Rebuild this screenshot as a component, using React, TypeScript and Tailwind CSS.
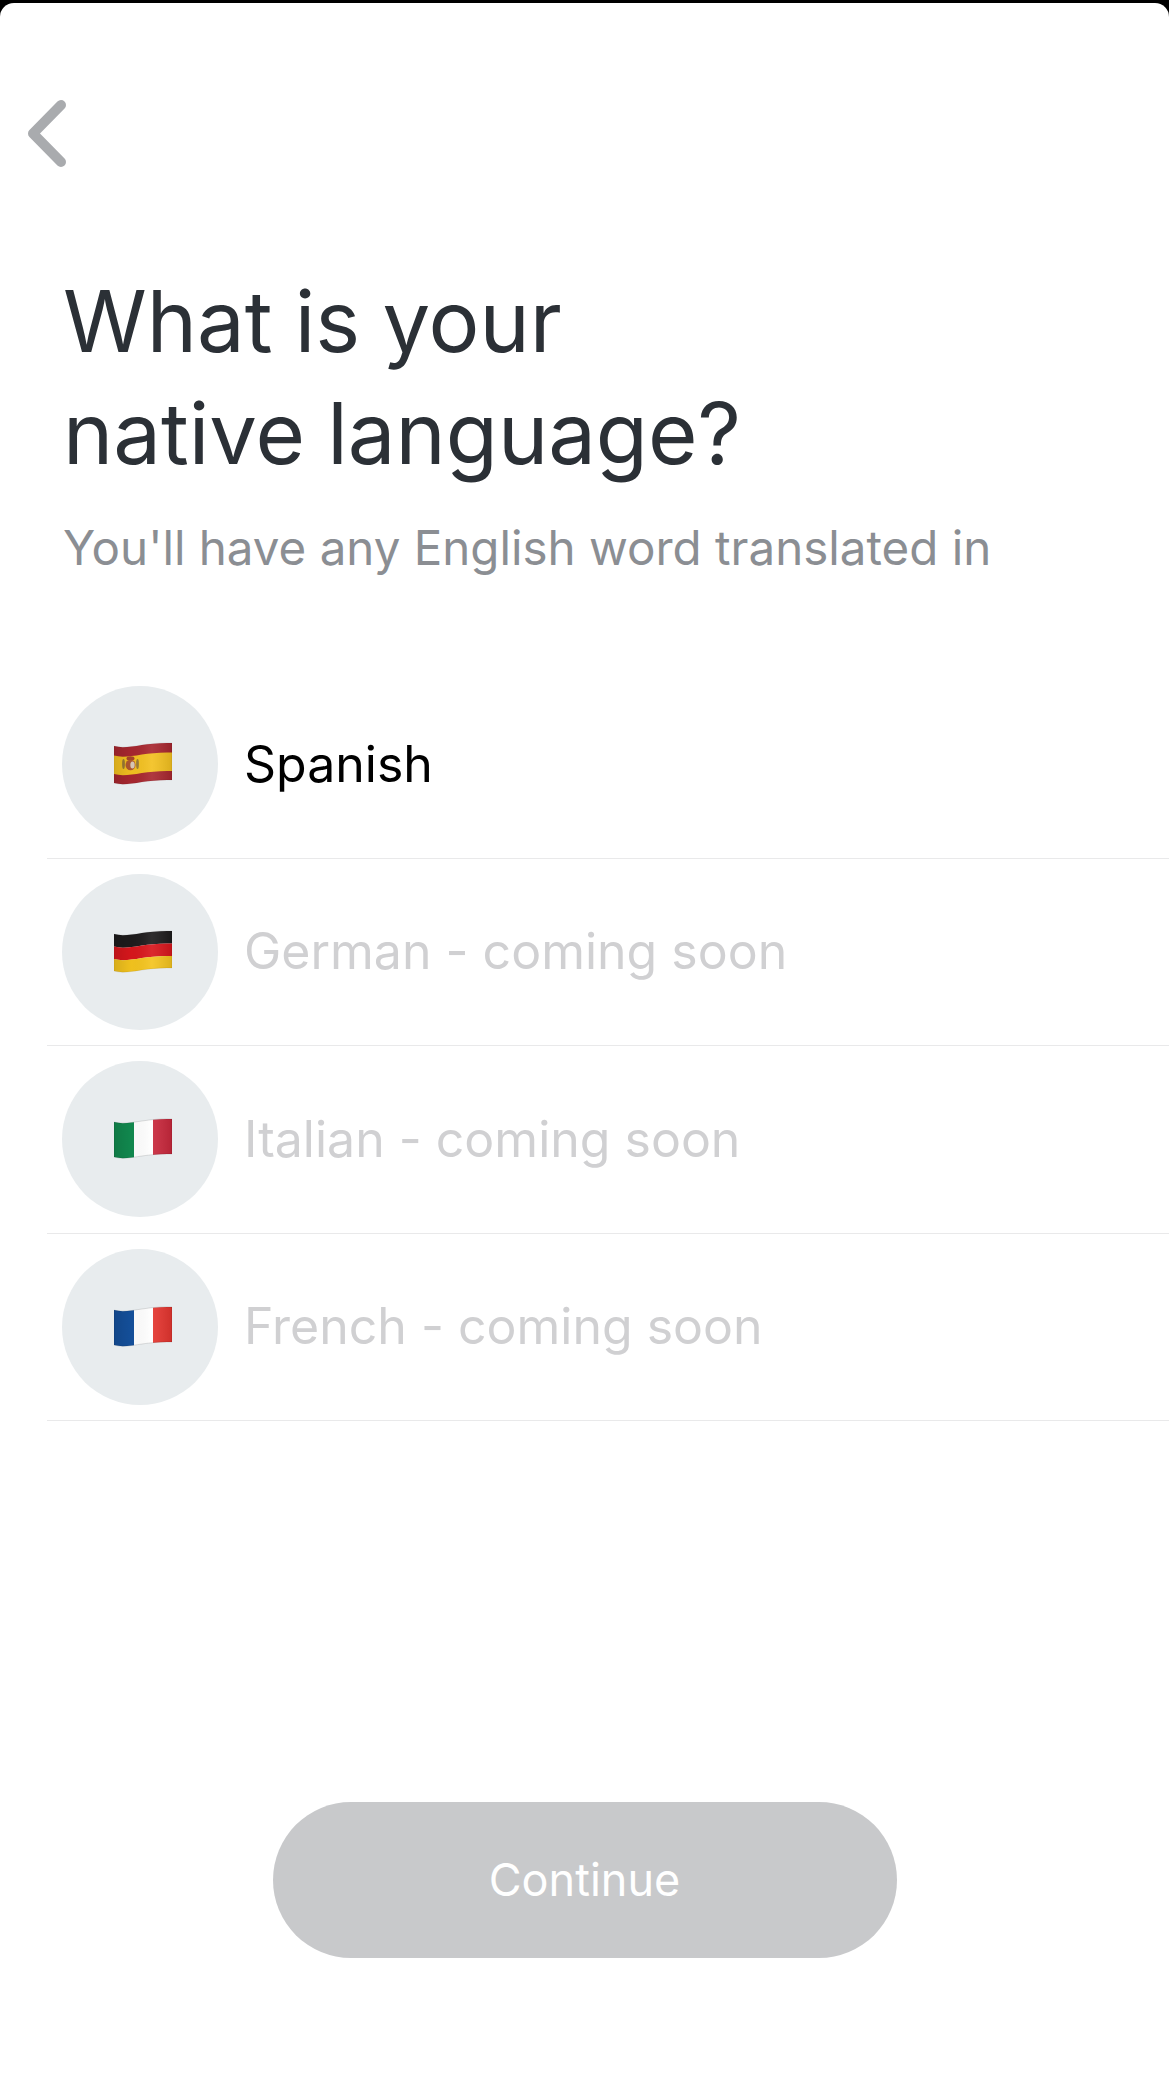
import React from "react";

// wave shaped band of a flag, a and b are the top and bottom of the band
const band = (a: number, b: number) =>
  `M0 ${a + 3} C14 ${a + 7} 30 ${a - 1} 58 ${a} L58 ${b} C30 ${b - 1} 14 ${b + 7} 0 ${b + 3} Z`;

const FlagShade = ({ id }: { id: string }) => (
  <linearGradient id={id} x1="0" y1="0" x2="1" y2="0">
    <stop offset="0" stopColor="#000" stopOpacity="0.12" />
    <stop offset="0.3" stopColor="#000" stopOpacity="0.02" />
    <stop offset="0.65" stopColor="#fff" stopOpacity="0.08" />
    <stop offset="1" stopColor="#000" stopOpacity="0.1" />
  </linearGradient>
);

const SpainFlag = () => (
  <svg width="58" height="44" viewBox="0 0 58 44" className="ml-[6px] blur-[0.5px]">
    <defs>
      <FlagShade id="es-shade" />
    </defs>
    <path d={band(1, 38)} fill="#a8272f" />
    <path d={band(10.5, 29)} fill="#f3c120" />
    <g>
      <ellipse cx="9.5" cy="22" rx="1.4" ry="5" fill="#9a7a34" />
      <ellipse cx="23.5" cy="22" rx="1.4" ry="5" fill="#9a7a34" />
      <ellipse cx="16.5" cy="16.5" rx="4" ry="2.2" fill="#a8452a" />
      <ellipse cx="16.5" cy="23" rx="5" ry="5.2" fill="#b0582f" />
      <ellipse cx="18.5" cy="23" rx="2.2" ry="3.6" fill="#d9c9b8" />
    </g>
    <path d={band(1, 38)} fill="url(#es-shade)" stroke="#000" strokeOpacity="0.12" strokeWidth="0.6" />
  </svg>
);

const GermanFlag = () => (
  <svg width="58" height="44" viewBox="0 0 58 44" className="ml-[6px] blur-[0.5px]">
    <defs>
      <FlagShade id="de-shade" />
    </defs>
    <path d={band(1, 13.5)} fill="#1d1b1c" />
    <path d={band(13.5, 26)} fill="#d8161c" />
    <path d={band(26, 38)} fill="#f4c41e" />
    <path d={band(1, 38)} fill="url(#de-shade)" stroke="#000" strokeOpacity="0.12" strokeWidth="0.6" />
  </svg>
);

const columnFlag = (id: string, left: string, middle: string, right: string) => (
  <svg width="58" height="44" viewBox="0 0 58 44" className="ml-[6px] blur-[0.5px]">
    <defs>
      <FlagShade id={`${id}-shade`} />
      <clipPath id={`${id}-clip`}>
        <path d={band(2, 37)} />
      </clipPath>
    </defs>
    <g clipPath={`url(#${id}-clip)`}>
      <rect x="0" y="0" width="20" height="44" fill={left} />
      <rect x="20" y="0" width="19" height="44" fill={middle} />
      <rect x="39" y="0" width="19" height="44" fill={right} />
    </g>
    <path d={band(2, 37)} fill={`url(#${id}-shade)`} stroke="#000" strokeOpacity="0.2" strokeWidth="0.6" />
  </svg>
);

const languages = [
  { name: "Spanish", flag: <SpainFlag />, enabled: true },
  { name: "German - coming soon", flag: <GermanFlag /> },
  { name: "Italian - coming soon", flag: columnFlag("it", "#118a4f", "#ffffff", "#c9283c") },
  { name: "French - coming soon", flag: columnFlag("fr", "#14509c", "#ffffff", "#e5352f") },
];

export default function App() {
  return (
    <div className="h-[2080px] bg-black pt-[3px] font-['Inter',sans-serif] overflow-hidden">
      <div className="h-full bg-white rounded-t-[14px] flex flex-col">
        <div className="pl-[26px] pt-[95px]">
          <svg width="44" height="72" viewBox="0 0 44 72" fill="none">
            <path d="M35 7 L7 35.5 L35 64" stroke="#a9abae" strokeWidth="10" strokeLinecap="round" strokeLinejoin="round" />
          </svg>
        </div>

        <h1 className="mt-[96px] pl-[63px] text-[85px] leading-[112px] font-normal text-[#2b3036] [word-spacing:-0.02em]">
          What is your
          <br />
          native language?
        </h1>
        <p className="mt-[28px] pl-[63px] text-[47.5px] leading-[60px] text-[#8b8e93]">
          You'll have any English word translated in
        </p>

        <ul className="mt-[93px] ml-[47px]">
          {languages.map((lang) => (
            <li key={lang.name} className="h-[187.5px] pl-[15px] flex items-start border-b border-[#e9e9ea]">
              <div className="w-[156px] h-[156px] mt-[15px] rounded-full bg-[#e8ecee] flex items-center justify-center shrink-0">
                {lang.flag}
              </div>
              <span
                className={`ml-[26px] mt-[15px] h-[156px] flex items-center text-[50px] ${
                  lang.enabled ? "text-black" : "text-[#d0d0d2]"
                }`}
              >
                {lang.name}
              </span>
            </li>
          ))}
        </ul>

        <div className="mt-auto mb-[122px] flex justify-center">
          <button className="w-[624px] h-[156px] rounded-full bg-[#c8c9cb] text-white text-[45px]">
            Continue
          </button>
        </div>
      </div>
    </div>
  );
}
